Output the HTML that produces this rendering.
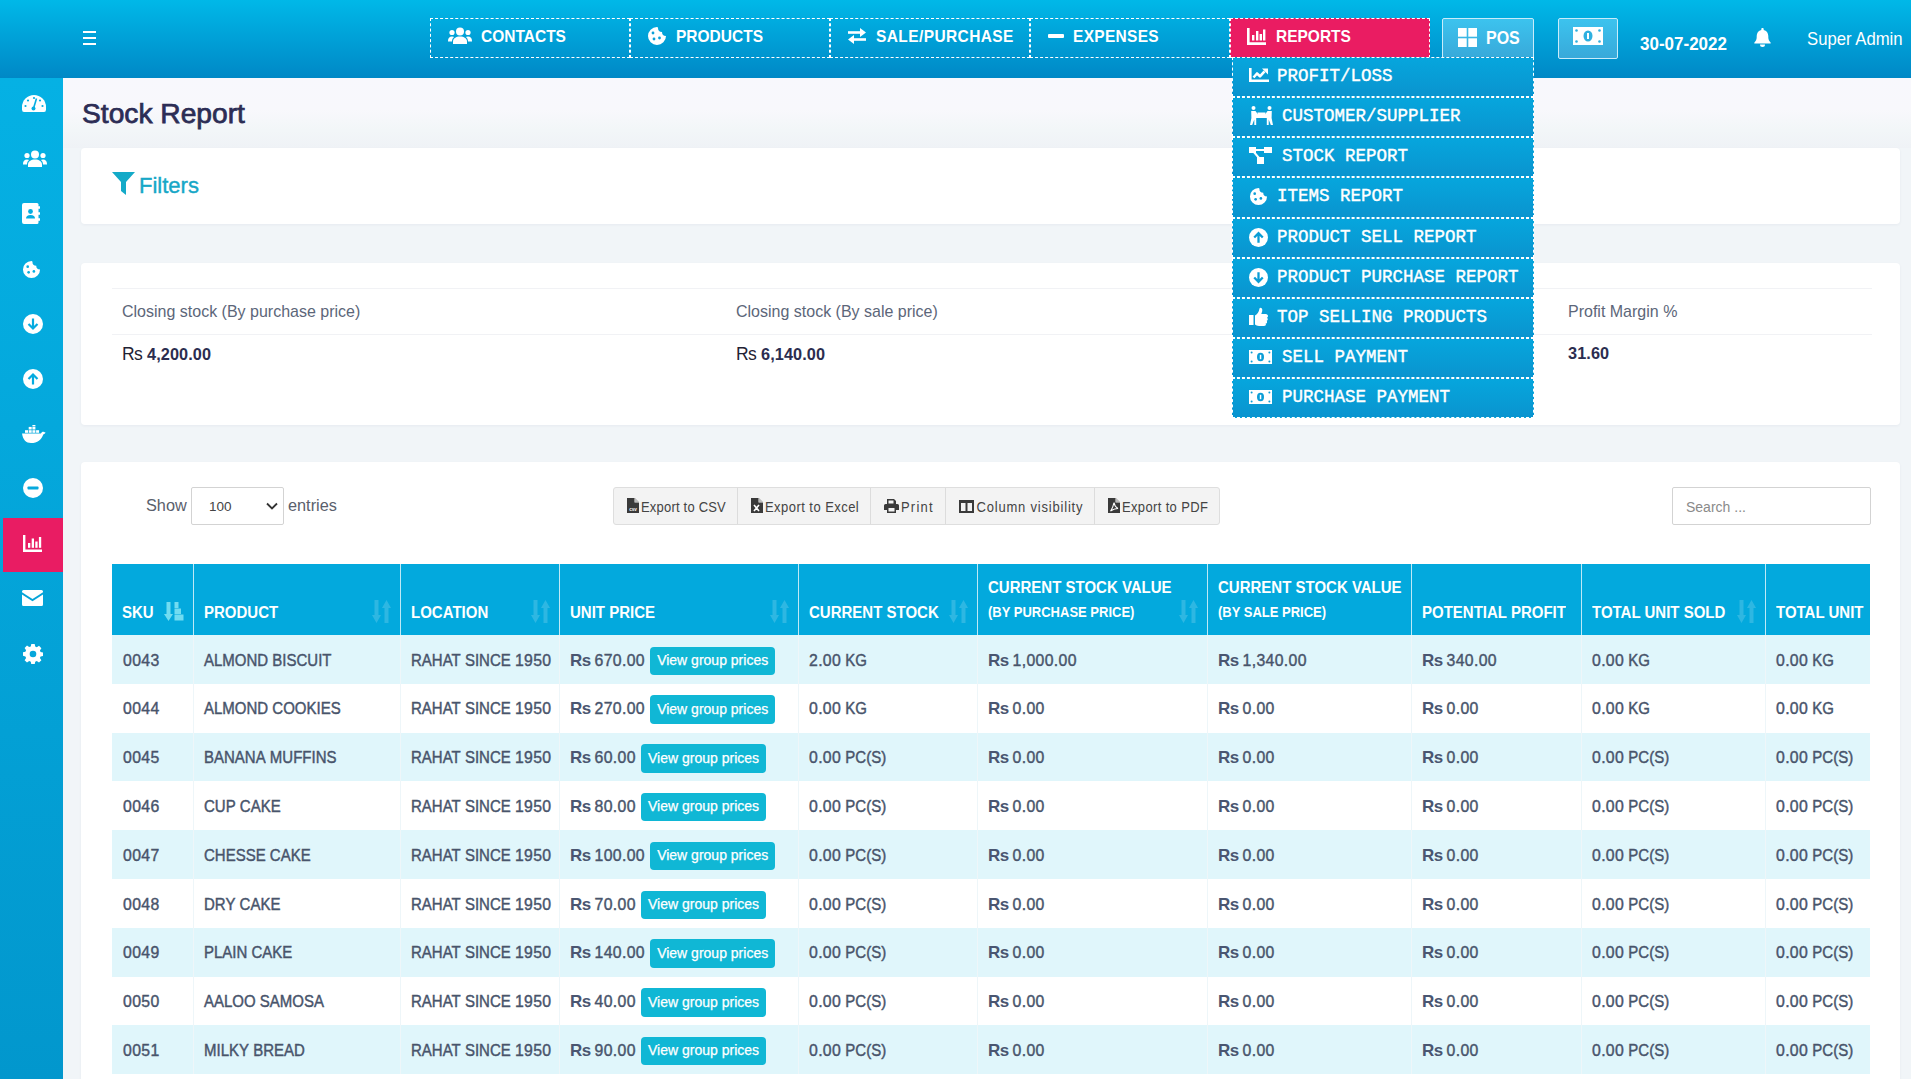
<!DOCTYPE html>
<html><head><meta charset="utf-8">
<style>
*{box-sizing:border-box;margin:0;padding:0}
html,body{width:1911px;height:1079px;overflow:hidden}
body{font-family:"Liberation Sans",sans-serif;background:#f1f5f8;position:relative;color:#4b5567}
.abs{position:absolute}
svg{display:block}
#hdr{left:0;top:0;width:1911px;height:78px;background:linear-gradient(#00b8e8,#0088c6)}
#side{left:0;top:78px;width:63px;height:1001px;background:linear-gradient(#05b1e4,#0297cd)}
.nav{position:absolute;top:18px;height:40px;width:200px;border:1px dashed #fff;color:#fff;font-size:15.5px;font-weight:bold;white-space:nowrap}
.nav .t{position:absolute;top:8.5px;transform:scaleY(1.1);transform-origin:0 80%}
.nav svg{position:absolute}
.btnh{position:absolute;top:18px;height:41px;border:1px solid #c9ecfa;border-radius:2px;background:linear-gradient(#3cc3ee,#38a9da)}
.dd{position:absolute;z-index:10;left:1232px;width:302px;height:40.2px;border:1px dashed #fff;background:linear-gradient(#06a6dd,#0a94cf);color:#fff;font-family:"Liberation Mono",monospace;font-weight:normal;font-size:17.5px;-webkit-text-stroke:.4px #fff;white-space:nowrap}
.dd .t{position:absolute;top:8px;transform:scaleY(1.08);transform-origin:0 80%}
.dd svg{position:absolute}
.sic{position:absolute;left:0;width:63px;height:55px}
.sic svg{position:absolute;left:50%;top:50%;transform:translate(-50%,-50%)}
.card{position:absolute;left:81px;width:1819px;background:#fff;border-radius:4px;box-shadow:0 1px 3px rgba(30,40,90,.05)}
</style></head>
<body>
<div id="hdr" class="abs"></div>
<div class="abs" style="left:0;top:78px;width:1911px;height:1px;background:#e2fbff"></div>
<!-- hamburger -->
<div class="abs" style="left:83px;top:31px;width:13px;height:2px;background:#fff"></div>
<div class="abs" style="left:83px;top:37px;width:13px;height:2px;background:#fff"></div>
<div class="abs" style="left:83px;top:42.5px;width:13px;height:2px;background:#fff"></div>

<!-- nav -->
<div class="nav" style="left:430px">
  <svg style="left:17px;top:8px" width="24" height="18" viewBox="0 0 24 18"><circle cx="12" cy="4.5" r="4" fill="#fff"/><circle cx="4" cy="5.5" r="2.6" fill="#fff"/><circle cx="20" cy="5.5" r="2.6" fill="#fff"/><path d="M5 17v-2.5c0-3 3-5 7-5s7 2 7 5V17z" fill="#fff"/><path d="M0 14c0-3 1.5-4.5 4-4.5 1 0 1.6.2 2.2.6C4.8 11 4 12.5 4 14.5H0z" fill="#fff"/><path d="M24 14c0-3-1.5-4.5-4-4.5-1 0-1.6.2-2.2.6 1.4.9 2.2 2.4 2.2 4.4H24z" fill="#fff"/></svg>
  <span class="t" style="left:50px">CONTACTS</span>
</div>
<div class="nav" style="left:630px">
  <svg style="left:16px;top:6.5px" width="20" height="20" viewBox="0 0 20 20"><path d="M10 1a9 9 0 1 0 9 9 4 4 0 0 1-4-4 4 4 0 0 1-4-4c0-.4 0-.7-1-1z" fill="#fff"/><circle cx="6" cy="7" r="1.4" fill="#0aa0d8"/><circle cx="7" cy="13" r="1.4" fill="#0aa0d8"/><circle cx="12.5" cy="12" r="1.4" fill="#0aa0d8"/></svg>
  <span class="t" style="left:45px">PRODUCTS</span>
</div>
<div class="nav" style="left:830px">
  <svg style="left:16px;top:9px" width="20" height="16" viewBox="0 0 20 16"><path d="M1 4.5h14" stroke="#fff" stroke-width="2.6"/><path d="M13 0l6 4.5-6 4.5z" fill="#fff"/><path d="M5 11.5h14" stroke="#fff" stroke-width="2.6"/><path d="M7 7l-6 4.5 6 4.5z" fill="#fff"/></svg>
  <span class="t" style="left:45px;letter-spacing:.4px">SALE/PURCHASE</span>
</div>
<div class="nav" style="left:1030px">
  <div class="abs" style="left:17px;top:15px;width:16px;height:3.5px;background:#fff;border-radius:1px"></div>
  <span class="t" style="left:42px;letter-spacing:.3px">EXPENSES</span>
</div>
<div class="nav" style="left:1230px;background:#ea1c62">
  <svg style="left:16px;top:9px" width="19" height="17" viewBox="0 0 19 17"><path d="M0 0h2.6v14.2H19V17H0z" fill="#fff"/><rect x="5" y="7" width="2.4" height="5.5" fill="#fff"/><rect x="9" y="3" width="2.4" height="9.5" fill="#fff"/><rect x="12.6" y="6" width="2.4" height="6.5" fill="#fff"/><rect x="16" y="1.5" width="2.4" height="11" fill="#fff"/></svg>
  <span class="t" style="left:45px">REPORTS</span>
</div>

<!-- POS -->
<div class="btnh" style="left:1442px;width:92px">
  <svg style="position:absolute;left:15px;top:9px" width="19" height="19" viewBox="0 0 19 19"><rect x="0" y="0" width="8.7" height="8.7" fill="#fff"/><rect x="10.3" y="0" width="8.7" height="8.7" fill="#fff"/><rect x="0" y="10.3" width="8.7" height="8.7" fill="#fff"/><rect x="10.3" y="10.3" width="8.7" height="8.7" fill="#fff"/></svg>
  <span class="abs" style="left:43px;top:10.5px;color:#fff;font-weight:bold;font-size:16px;transform:scaleY(1.12);transform-origin:0 80%">POS</span>
</div>
<!-- cash -->
<div class="btnh" style="left:1558px;width:60px">
  <svg style="position:absolute;left:14px;top:8px" width="30" height="18" viewBox="0 0 30 18"><rect x="0" y="0" width="30" height="18" fill="#fff"/><ellipse cx="15" cy="9" rx="4.5" ry="5.5" fill="#2fb0e0"/><rect x="14" y="6" width="2" height="6" fill="#fff"/><circle cx="3.5" cy="3.5" r="1.3" fill="#2fb0e0"/><circle cx="26.5" cy="3.5" r="1.3" fill="#2fb0e0"/><circle cx="3.5" cy="14.5" r="1.3" fill="#2fb0e0"/><circle cx="26.5" cy="14.5" r="1.3" fill="#2fb0e0"/></svg>
</div>
<div class="abs" style="left:1640px;top:35px;color:#fff;font-weight:bold;font-size:17px;transform:scaleY(1.05);transform-origin:0 80%">30-07-2022</div>
<svg class="abs" style="left:1754px;top:28px" width="17" height="19" viewBox="0 0 17 19"><path d="M8.5 0c.8 0 1.2.5 1.2 1.2v.7c2.8.6 4.6 3 4.6 6v1.3c0 2.3.9 3.8 2.1 5 .5.5.5 1.4-.4 1.4H1c-.9 0-.9-.9-.4-1.4 1.2-1.2 2.1-2.7 2.1-5V7.9c0-3 1.8-5.4 4.6-6v-.7C7.3.5 7.7 0 8.5 0z" fill="#fff"/><path d="M6 16.5h5a2.5 2.5 0 0 1-5 0z" fill="#fff"/></svg>
<div class="abs" style="left:1807px;top:30px;color:#fff;font-size:16.7px;transform:scaleY(1.08);transform-origin:0 80%">Super Admin</div>


<div class="abs" style="left:63px;top:78px;width:1848px;height:70px;background:linear-gradient(#f8f8fd 0%,#f8f8fc 45%,#f2f6f8 75%,#eff2f6 100%)"></div>
<div id="side" class="abs"></div>
<div class="abs" style="left:3px;top:518px;width:60px;height:54px;background:#e91c63"></div>
<!-- gauge -->
<svg class="abs" style="left:22px;top:95px" width="24" height="17" viewBox="0 0 24 17"><path d="M12 0A12 12 0 0 0 0 12v2.5Q0 17 2 17h20q2 0 2-2.5V12A12 12 0 0 0 12 0z" fill="#fff"/><circle cx="6" cy="5.5" r="1.1" fill="#05aee2"/><circle cx="12" cy="3" r="1.1" fill="#05aee2"/><circle cx="18" cy="5.5" r="1.1" fill="#05aee2"/><circle cx="3.5" cy="11" r="1.1" fill="#05aee2"/><circle cx="20.5" cy="11" r="1.1" fill="#05aee2"/><path d="M11.5 13.5L14.5 3.5" stroke="#05aee2" stroke-width="1.6"/><circle cx="11.5" cy="13.5" r="2" fill="#05aee2"/></svg>
<!-- users -->
<svg class="abs" style="left:22px;top:150px" width="26" height="18" viewBox="0 0 24 18"><circle cx="12" cy="4.5" r="4" fill="#fff"/><circle cx="4" cy="5.5" r="2.6" fill="#fff"/><circle cx="20" cy="5.5" r="2.6" fill="#fff"/><path d="M5 17v-2.5c0-3 3-5 7-5s7 2 7 5V17z" fill="#fff"/><path d="M0 14c0-3 1.5-4.5 4-4.5 1 0 1.6.2 2.2.6C4.8 11 4 12.5 4 14.5H0z" fill="#fff"/><path d="M24 14c0-3-1.5-4.5-4-4.5-1 0-1.6.2-2.2.6 1.4.9 2.2 2.4 2.2 4.4H24z" fill="#fff"/></svg>
<!-- address book -->
<svg class="abs" style="left:22px;top:203px" width="18" height="21" viewBox="0 0 18 21"><path d="M2 0h13q1.5 0 1.5 1.5V19.5Q16.5 21 15 21H2Q0 21 0 19V2Q0 0 2 0z" fill="#fff"/><rect x="16" y="3" width="2" height="3" rx="1" fill="#fff"/><rect x="16" y="9" width="2" height="3" rx="1" fill="#fff"/><rect x="16" y="15" width="2" height="3" rx="1" fill="#fff"/><circle cx="8.5" cy="8.5" r="2.4" fill="#05aee2"/><path d="M4 15.5q0-3.5 4.5-3.5t4.5 3.5z" fill="#05aee2"/></svg>
<!-- cookie -->
<svg class="abs" style="left:22px;top:260px" width="19" height="19" viewBox="0 0 20 20"><path d="M10 1a9 9 0 1 0 9 9 4 4 0 0 1-4-4 4 4 0 0 1-4-4c0-.4 0-.7-1-1z" fill="#fff"/><circle cx="6" cy="7" r="1.4" fill="#05aee2"/><circle cx="7" cy="13" r="1.4" fill="#05aee2"/><circle cx="12.5" cy="12" r="1.4" fill="#05aee2"/></svg>
<!-- down -->
<svg class="abs" style="left:23px;top:314px" width="20" height="20" viewBox="0 0 20 20"><circle cx="10" cy="10" r="10" fill="#fff"/><path d="M10 4.5V14.5M5.5 10l4.5 4.5 4.5-4.5" stroke="#05abe0" stroke-width="2.2" fill="none"/></svg>
<!-- up -->
<svg class="abs" style="left:23px;top:369px" width="20" height="20" viewBox="0 0 20 20"><circle cx="10" cy="10" r="10" fill="#fff"/><path d="M10 15.5V5.5M5.5 10l4.5-4.5 4.5 4.5" stroke="#05abe0" stroke-width="2.2" fill="none"/></svg>
<!-- docker -->
<svg class="abs" style="left:22px;top:425px" width="24" height="18" viewBox="0 0 24 18"><path d="M0 8.5h19c.5-1.5 2-2 3-1.5l1.5.6c-.4 1-1.2 1.6-2.2 1.8C19.5 14.5 15.5 18 9 18 4 18 1 15 0 8.5z" fill="#fff"/><rect x="3" y="5.2" width="3" height="2.6" fill="#fff"/><rect x="6.7" y="5.2" width="3" height="2.6" fill="#fff"/><rect x="10.4" y="5.2" width="3" height="2.6" fill="#fff"/><rect x="14.1" y="5.2" width="3" height="2.6" fill="#fff"/><rect x="6.7" y="1.9" width="3" height="2.6" fill="#fff"/><rect x="10.4" y="1.9" width="3" height="2.6" fill="#fff"/><rect x="10.4" y="-1" width="3" height="2.4" fill="#fff"/></svg>
<!-- minus -->
<svg class="abs" style="left:23px;top:478px" width="20" height="20" viewBox="0 0 20 20"><circle cx="10" cy="10" r="10" fill="#fff"/><rect x="4.5" y="8.4" width="11" height="3.2" rx=".8" fill="#05a9de"/></svg>
<!-- chart -->
<svg class="abs" style="left:22px;top:535px" width="21" height="17" viewBox="0 0 19 17"><path d="M0 0h2.4v14.4H19V17H0z" fill="#fff"/><rect x="5" y="8" width="2.3" height="4.8" fill="#fff"/><rect x="8.7" y="3.5" width="2.3" height="9.3" fill="#fff"/><rect x="12.3" y="6.5" width="2.3" height="6.3" fill="#fff"/><rect x="15.9" y="2" width="2.3" height="10.8" fill="#fff"/></svg>
<!-- envelope -->
<svg class="abs" style="left:22px;top:590px" width="21" height="16" viewBox="0 0 21 16"><path d="M1.5 0h18Q21 0 21 1.5v.8L10.5 9 0 2.3v-.8Q0 0 1.5 0z" fill="#fff"/><path d="M0 4.5l10.5 6.8L21 4.5V14.5Q21 16 19.5 16h-18Q0 16 0 14.5z" fill="#fff"/></svg>
<!-- gear -->
<svg class="abs" style="left:23px;top:644px" width="20" height="20" viewBox="0 0 20 20"><path d="M8.3 0h3.4l.5 2.6 1.6.7 2.2-1.5 2.4 2.4-1.5 2.2.7 1.6 2.4.5v3.4l-2.4.5-.7 1.6 1.5 2.2-2.4 2.4-2.2-1.5-1.6.7-.5 2.6H8.3l-.5-2.6-1.6-.7-2.2 1.5-2.4-2.4 1.5-2.2-.7-1.6L0 11.7V8.3l2.4-.5.7-1.6-1.5-2.2 2.4-2.4 2.2 1.5 1.6-.7z" fill="#fff"/><circle cx="10" cy="10" r="3.3" fill="#05a6db"/></svg>


<!-- dropdown -->
<div class="dd" style="top:57.00px">
  <svg style="left:16px;top:10px" width="20" height="14" viewBox="0 0 20 14"><path d="M0 0h2.6v11.4H20V14H0z" fill="#fff"/><path d="M4.5 9.5l3.5-4 3 2.8 4.5-5" stroke="#fff" stroke-width="2.6" fill="none" stroke-linejoin="round"/><path d="M13 0.5h6v6z" fill="#fff"/></svg>
  <span class="t" style="left:44px">PROFIT/LOSS</span>
</div>
<div class="dd" style="top:97.15px">
  <svg style="left:17px;top:8px" width="23" height="19" viewBox="0 0 23 19"><circle cx="3.5" cy="2" r="2" fill="#fff"/><circle cx="19.5" cy="2" r="2" fill="#fff"/><path d="M1.2 5h4.3l2.5 3.5V12H6.2v7H4.3v-5.5L2.2 19H0l1.4-7z" fill="#fff"/><path d="M21.8 5h-4.3L15 8.5V12h1.8v7h1.9v-5.5l2.1 5.5H23l-1.4-7z" fill="#fff"/><rect x="7.5" y="6.5" width="8" height="5.5" fill="#fff"/></svg>
  <span class="t" style="left:49px">CUSTOMER/SUPPLIER</span>
</div>
<div class="dd" style="top:137.30px">
  <svg style="left:16px;top:9px" width="23" height="17" viewBox="0 0 23 17"><rect x="0" y="0" width="7" height="6" fill="#fff"/><rect x="15" y="0" width="8" height="6" fill="#fff"/><rect x="8" y="10" width="7" height="7" fill="#fff"/><path d="M5 3h11M4 4l6 7" stroke="#fff" stroke-width="2"/></svg>
  <span class="t" style="left:49px">STOCK REPORT</span>
</div>
<div class="dd" style="top:177.45px">
  <svg style="left:16px;top:9px" width="19" height="19" viewBox="0 0 20 20"><path d="M10 1a9 9 0 1 0 9 9 4 4 0 0 1-4-4 4 4 0 0 1-4-4c0-.4 0-.7-1-1z" fill="#fff"/><circle cx="6" cy="7" r="1.4" fill="#0a9dd6"/><circle cx="7" cy="13" r="1.4" fill="#0a9dd6"/><circle cx="12.5" cy="12" r="1.4" fill="#0a9dd6"/></svg>
  <span class="t" style="left:44px">ITEMS REPORT</span>
</div>
<div class="dd" style="top:217.60px">
  <svg style="left:16px;top:9px" width="19" height="19" viewBox="0 0 20 20"><circle cx="10" cy="10" r="10" fill="#fff"/><path d="M10 15.5V6M5.5 10l4.5-4.5 4.5 4.5" stroke="#0a9dd6" stroke-width="2.4" fill="none"/></svg>
  <span class="t" style="left:44px">PRODUCT SELL REPORT</span>
</div>
<div class="dd" style="top:257.75px">
  <svg style="left:16px;top:9px" width="19" height="19" viewBox="0 0 20 20"><circle cx="10" cy="10" r="10" fill="#fff"/><path d="M10 4.5V14M5.5 10l4.5 4.5 4.5-4.5" stroke="#0a9dd6" stroke-width="2.4" fill="none"/></svg>
  <span class="t" style="left:44px">PRODUCT PURCHASE REPORT</span>
</div>
<div class="dd" style="top:297.90px">
  <svg style="left:16px;top:8px" width="19" height="19" viewBox="0 0 19 19"><rect x="0" y="8" width="4.5" height="10" fill="#fff"/><path d="M6 8.5c2-1 4-3.5 4.5-7 .2-1.2 2.8-1 2.8 1.5 0 2-1 3.5-1 4h4.5c1.3 0 2.2 1 2.2 2 0 .8-.5 1.4-1 1.7.6.4.8 1 .8 1.5 0 .8-.6 1.4-1.2 1.6.3.3.5.8.5 1.2 0 .9-.7 1.6-1.5 1.6.2.3.3.6.3 1 0 1-.8 1.4-1.8 1.4H10c-2 0-3-1-4-1.5z" fill="#fff"/></svg>
  <span class="t" style="left:44px">TOP SELLING PRODUCTS</span>
</div>
<div class="dd" style="top:338.05px">
  <svg style="left:16px;top:11px" width="23" height="14" viewBox="0 0 23 14"><rect x="0" y="0" width="23" height="14" fill="#fff"/><ellipse cx="11.5" cy="7" rx="3.5" ry="4.2" fill="#0a9dd6"/><rect x="10.8" y="4.8" width="1.5" height="4.4" fill="#fff"/><circle cx="2.6" cy="2.6" r="1" fill="#0a9dd6"/><circle cx="20.4" cy="2.6" r="1" fill="#0a9dd6"/><circle cx="2.6" cy="11.4" r="1" fill="#0a9dd6"/><circle cx="20.4" cy="11.4" r="1" fill="#0a9dd6"/></svg>
  <span class="t" style="left:49px">SELL PAYMENT</span>
</div>
<div class="dd" style="top:378.20px;height:40px">
  <svg style="left:16px;top:11px" width="23" height="14" viewBox="0 0 23 14"><rect x="0" y="0" width="23" height="14" fill="#fff"/><ellipse cx="11.5" cy="7" rx="3.5" ry="4.2" fill="#0a9dd6"/><rect x="10.8" y="4.8" width="1.5" height="4.4" fill="#fff"/><circle cx="2.6" cy="2.6" r="1" fill="#0a9dd6"/><circle cx="20.4" cy="2.6" r="1" fill="#0a9dd6"/><circle cx="2.6" cy="11.4" r="1" fill="#0a9dd6"/><circle cx="20.4" cy="11.4" r="1" fill="#0a9dd6"/></svg>
  <span class="t" style="left:49px">PURCHASE PAYMENT</span>
</div>
<style>
.tx{position:absolute;white-space:nowrap}
.hd{position:absolute;top:564px;height:71px;background:#03a9dd;color:#fff;font-weight:bold;font-size:15px;white-space:nowrap}
.hd .l{position:absolute;left:10px;transform:scaleY(1.16);transform-origin:0 80%}
.srt{position:absolute;top:38px;opacity:.35}
.row{position:absolute;left:112px;width:1758px;height:48.875px}
.cell{position:absolute;top:16.5px;font-size:15px;color:#48546b;white-space:nowrap;-webkit-text-stroke:.4px #48546b}
.vg{display:inline-block;vertical-align:top;margin-top:-5px;margin-left:1px;height:28.5px;padding:5.5px 7px 0 7px;background:#10b7d5;color:#fff;border-radius:4px;font-size:14px;-webkit-text-stroke:.25px #fff}
.rs{font-weight:bold;font-size:17px;letter-spacing:-.6px;margin-right:4px;color:#4a5671;line-height:1;-webkit-text-stroke:0}
.n{font-size:15.8px;letter-spacing:.35px}
.w{display:inline-block;transform:scaleY(1.08);transform-origin:0 80%}
.btn{position:absolute;top:0;height:37px;border-right:1px solid #dcdcdc;font-size:13px;color:#444}
</style>
<div class="tx" style="left:82px;top:97px;font-size:28.2px;font-weight:normal;color:#2c2d55;-webkit-text-stroke:.75px #2c2d55">Stock Report</div>
<div class="card" style="top:148px;height:76px"></div>
<svg class="abs" style="left:112px;top:172px" width="23" height="23" viewBox="0 0 23 23"><path d="M0 0h23L14 10v13l-5-4V10z" fill="#14aac8"/></svg>
<div class="tx" style="left:139px;top:173px;font-size:22px;color:#17a7c7;-webkit-text-stroke:.4px #17a7c7">Filters</div>
<div class="card" style="top:263px;height:162px"></div>
<div class="abs" style="left:112px;top:288px;width:1760px;height:1px;background:#f1f2f5"></div>
<div class="abs" style="left:112px;top:334px;width:1760px;height:1px;background:#f1f2f5"></div>
<div class="tx" style="left:122px;top:303px;font-size:16px;color:#5c6679;transform:scaleY(1.05);transform-origin:0 80%">Closing stock (By purchase price)</div>
<div class="tx" style="left:122px;top:344px;font-size:16.3px;font-weight:bold;color:#2b2d50;letter-spacing:.1px"><span style="font-weight:normal;font-size:17.5px;letter-spacing:-.7px;margin-right:5px;color:#1f2233">Rs</span>4,200.00</div>
<div class="tx" style="left:736px;top:303px;font-size:16px;color:#5c6679;transform:scaleY(1.05);transform-origin:0 80%">Closing stock (By sale price)</div>
<div class="tx" style="left:736px;top:344px;font-size:16.3px;font-weight:bold;color:#2b2d50;letter-spacing:.1px"><span style="font-weight:normal;font-size:17.5px;letter-spacing:-.7px;margin-right:5px;color:#1f2233">Rs</span>6,140.00</div>
<div class="tx" style="left:1350px;top:303px;font-size:16px;color:#5c6679;transform:scaleY(1.05);transform-origin:0 80%">Potential profit</div>
<div class="tx" style="left:1350px;top:344px;font-size:16.3px;font-weight:bold;color:#2b2d50;letter-spacing:.1px"><span style="font-weight:normal;font-size:17.5px;letter-spacing:-.7px;margin-right:5px;color:#1f2233">Rs</span>1,940.00</div>
<div class="tx" style="left:1568px;top:303px;font-size:16px;color:#5c6679;transform:scaleY(1.05);transform-origin:0 80%">Profit Margin %</div>
<div class="tx" style="left:1568px;top:344px;font-size:16.3px;font-weight:bold;color:#2b2d50;letter-spacing:.1px">31.60</div>
<div class="card" style="top:462px;height:640px"></div>
<div class="tx" style="left:146px;top:496px;font-size:16.3px;color:#5a606c">Show</div>
<div class="abs" style="left:191px;top:487px;width:93px;height:38px;border:1px solid #d3d3d3;border-radius:2px;background:#fff"></div>
<div class="tx" style="left:209px;top:499px;font-size:13.5px;color:#444">100</div>
<svg class="abs" style="left:266px;top:502px" width="12" height="8" viewBox="0 0 12 8"><path d="M1 1.5l5 5 5-5" stroke="#333" stroke-width="1.8" fill="none"/></svg>
<div class="tx" style="left:288px;top:496px;font-size:16.3px;color:#5a606c">entries</div>
<div class="abs" style="left:613px;top:487px;width:607px;height:38px;border:1px solid #dedede;border-radius:3px;background:#f3f3f3;overflow:hidden">
<div class="btn" style="left:0px;width:124px"><svg class="abs" style="left:13px;top:10px" width="12" height="15" viewBox="0 0 12 15"><path d="M0 0h7.5L12 4.5V15H0z" fill="#3a3a3a"/><path d="M7.5 0v4.5H12" fill="#f3f3f3"/><path d="M8 0v4h4" fill="#bdbdbd"/><text x="6" y="13" font-size="4.6" font-family="Liberation Sans" font-weight="bold" fill="#fff" text-anchor="middle">csv</text></svg><span class="tx" style="left:27px;top:11.5px;letter-spacing:0.2px;transform:scaleY(1.15);transform-origin:0 80%">Export to CSV</span></div>
<div class="btn" style="left:124px;width:133px"><svg class="abs" style="left:13px;top:10px" width="12" height="15" viewBox="0 0 12 15"><path d="M0 0h7.5L12 4.5V15H0z" fill="#3a3a3a"/><path d="M7.5 0v4.5H12" fill="#f3f3f3"/><path d="M8 0v4h4" fill="#bdbdbd"/><path d="M3 7l5 6M8 7l-5 6" stroke="#fff" stroke-width="1.6"/></svg><span class="tx" style="left:27px;top:11.5px;letter-spacing:0.45px;transform:scaleY(1.15);transform-origin:0 80%">Export to Excel</span></div>
<div class="btn" style="left:257px;width:75px"><svg class="abs" style="left:13px;top:11px" width="15" height="14" viewBox="0 0 15 14"><path d="M3 0h7l2 2v3H3z" fill="#3a3a3a"/><path d="M0 6.5Q0 5 1.5 5h12Q15 5 15 6.5V11h-3v3H3v-3H0z" fill="#3a3a3a"/><rect x="4.5" y="9" width="6" height="3.5" fill="#f3f3f3"/><rect x="4.5" y="1.5" width="5" height="3" fill="#f3f3f3"/></svg><span class="tx" style="left:30px;top:11.5px;letter-spacing:1.2px;transform:scaleY(1.15);transform-origin:0 80%">Print</span></div>
<div class="btn" style="left:332px;width:149px"><svg class="abs" style="left:13px;top:12px" width="15" height="13" viewBox="0 0 15 13"><path d="M0 0h15v13H0z" fill="#3a3a3a"/><rect x="2" y="3" width="4.5" height="8" fill="#f3f3f3"/><rect x="8.5" y="3" width="4.5" height="8" fill="#f3f3f3"/></svg><span class="tx" style="left:30.5px;top:11.5px;letter-spacing:0.8px;transform:scaleY(1.15);transform-origin:0 80%">Column visibility</span></div>
<div class="btn" style="left:481px;width:126px"><svg class="abs" style="left:13px;top:10px" width="12" height="15" viewBox="0 0 12 15"><path d="M0 0h7.5L12 4.5V15H0z" fill="#3a3a3a"/><path d="M7.5 0v4.5H12" fill="#f3f3f3"/><path d="M8 0v4h4" fill="#bdbdbd"/><path d="M2.5 13c1.5-2 3-6 3.5-8.5.4 2.5 2 5 4 6-2 0-5 1-7.5 2.5z" stroke="#fff" stroke-width="1.1" fill="none"/></svg><span class="tx" style="left:27px;top:11.5px;letter-spacing:0.35px;transform:scaleY(1.15);transform-origin:0 80%">Export to PDF</span></div>
</div>
<div class="abs" style="left:1672px;top:487px;width:199px;height:38px;border:1px solid #d3d3d3;border-radius:2px;background:#fff"></div>
<div class="tx" style="left:1686px;top:498.5px;font-size:14px;color:#8a8a8a">Search ...</div>
<div class="hd" style="left:112px;width:81px;">
<span class="l" style="top:40px">SKU</span>
<svg class="abs" style="left:52px;top:38px;opacity:.6" width="20" height="19" viewBox="0 0 20 19"><rect x="2.5" y="0" width="4" height="13" fill="#bff"/><path d="M0 12h9l-4.5 7z" fill="#bff"/><rect x="10.5" y="0" width="4" height="6" fill="#bff"/><rect x="10.5" y="6.5" width="6.5" height="5.5" fill="#bff"/><rect x="10.5" y="12.5" width="9" height="6" fill="#bff"/></svg>
</div>
<div class="hd" style="left:193px;width:207px;border-left:1px solid #bfe9f6;">
<span class="l" style="top:40px">PRODUCT</span>
<svg class="abs" style="left:178px;top:36px;opacity:.17" width="19" height="23" viewBox="0 0 19 23"><rect x="2.5" y="0" width="4" height="16" fill="#fff"/><path d="M0 15h9l-4.5 8z" fill="#fff"/><rect x="12.5" y="7" width="4" height="16" fill="#fff"/><path d="M10 8h9l-4.5-8z" fill="#fff"/></svg>
</div>
<div class="hd" style="left:400px;width:159px;border-left:1px solid #bfe9f6;">
<span class="l" style="top:40px">LOCATION</span>
<svg class="abs" style="left:130px;top:36px;opacity:.17" width="19" height="23" viewBox="0 0 19 23"><rect x="2.5" y="0" width="4" height="16" fill="#fff"/><path d="M0 15h9l-4.5 8z" fill="#fff"/><rect x="12.5" y="7" width="4" height="16" fill="#fff"/><path d="M10 8h9l-4.5-8z" fill="#fff"/></svg>
</div>
<div class="hd" style="left:559px;width:239px;border-left:1px solid #bfe9f6;">
<span class="l" style="top:40px">UNIT PRICE</span>
<svg class="abs" style="left:210px;top:36px;opacity:.17" width="19" height="23" viewBox="0 0 19 23"><rect x="2.5" y="0" width="4" height="16" fill="#fff"/><path d="M0 15h9l-4.5 8z" fill="#fff"/><rect x="12.5" y="7" width="4" height="16" fill="#fff"/><path d="M10 8h9l-4.5-8z" fill="#fff"/></svg>
</div>
<div class="hd" style="left:798px;width:179px;border-left:1px solid #bfe9f6;">
<span class="l" style="top:40px">CURRENT STOCK</span>
<svg class="abs" style="left:150px;top:36px;opacity:.17" width="19" height="23" viewBox="0 0 19 23"><rect x="2.5" y="0" width="4" height="16" fill="#fff"/><path d="M0 15h9l-4.5 8z" fill="#fff"/><rect x="12.5" y="7" width="4" height="16" fill="#fff"/><path d="M10 8h9l-4.5-8z" fill="#fff"/></svg>
</div>
<div class="hd" style="left:977px;width:230px;border-left:1px solid #bfe9f6;">
<span class="l" style="top:15px">CURRENT STOCK VALUE</span><span class="l" style="top:41px;font-size:13px">(BY PURCHASE PRICE)</span>
<svg class="abs" style="left:201px;top:36px;opacity:.17" width="19" height="23" viewBox="0 0 19 23"><rect x="2.5" y="0" width="4" height="16" fill="#fff"/><path d="M0 15h9l-4.5 8z" fill="#fff"/><rect x="12.5" y="7" width="4" height="16" fill="#fff"/><path d="M10 8h9l-4.5-8z" fill="#fff"/></svg>
</div>
<div class="hd" style="left:1207px;width:204px;border-left:1px solid #bfe9f6;">
<span class="l" style="top:15px">CURRENT STOCK VALUE</span><span class="l" style="top:41px;font-size:13px">(BY SALE PRICE)</span>
</div>
<div class="hd" style="left:1411px;width:170px;border-left:1px solid #bfe9f6;">
<span class="l" style="top:40px">POTENTIAL PROFIT</span>
</div>
<div class="hd" style="left:1581px;width:184px;border-left:1px solid #bfe9f6;">
<span class="l" style="top:40px">TOTAL UNIT SOLD</span>
<svg class="abs" style="left:155px;top:36px;opacity:.17" width="19" height="23" viewBox="0 0 19 23"><rect x="2.5" y="0" width="4" height="16" fill="#fff"/><path d="M0 15h9l-4.5 8z" fill="#fff"/><rect x="12.5" y="7" width="4" height="16" fill="#fff"/><path d="M10 8h9l-4.5-8z" fill="#fff"/></svg>
</div>
<div class="hd" style="left:1765px;width:105px;border-left:1px solid #bfe9f6;">
<span class="l" style="top:40px">TOTAL UNIT</span>
</div>
<div class="row" style="top:635.000px;background:#e0f6fb">
<div class="abs" style="left:81px;top:0;width:1px;height:100%;background:#eef6f9"></div>
<div class="abs" style="left:288px;top:0;width:1px;height:100%;background:#eef6f9"></div>
<div class="abs" style="left:447px;top:0;width:1px;height:100%;background:#eef6f9"></div>
<div class="abs" style="left:686px;top:0;width:1px;height:100%;background:#eef6f9"></div>
<div class="abs" style="left:865px;top:0;width:1px;height:100%;background:#eef6f9"></div>
<div class="abs" style="left:1095px;top:0;width:1px;height:100%;background:#eef6f9"></div>
<div class="abs" style="left:1299px;top:0;width:1px;height:100%;background:#eef6f9"></div>
<div class="abs" style="left:1469px;top:0;width:1px;height:100%;background:#eef6f9"></div>
<div class="abs" style="left:1653px;top:0;width:1px;height:100%;background:#eef6f9"></div>
<div class="cell" style="left:11px"><span class="n">0043</span></div>
<div class="cell" style="left:92px"><span class="w">ALMOND</span> <span class="w">BISCUIT</span></div>
<div class="cell" style="left:299px"><span class="w">RAHAT</span> <span class="w">SINCE</span> <span class="n">1950</span></div>
<div class="cell" style="left:458px"><span class="rs">Rs</span><span class="n">670.00</span> <span class="vg">View group prices</span></div>
<div class="cell" style="left:697px"><span class="n">2.00</span> <span class="w">KG</span></div>
<div class="cell" style="left:876px"><span class="rs">Rs</span><span class="n">1,000.00</span></div>
<div class="cell" style="left:1106px"><span class="rs">Rs</span><span class="n">1,340.00</span></div>
<div class="cell" style="left:1310px"><span class="rs">Rs</span><span class="n">340.00</span></div>
<div class="cell" style="left:1480px"><span class="n">0.00</span> <span class="w">KG</span></div>
<div class="cell" style="left:1664px"><span class="n">0.00</span> <span class="w">KG</span></div>
</div>
<div class="row" style="top:683.800px;background:#ffffff">
<div class="abs" style="left:81px;top:0;width:1px;height:100%;background:#eef6f9"></div>
<div class="abs" style="left:288px;top:0;width:1px;height:100%;background:#eef6f9"></div>
<div class="abs" style="left:447px;top:0;width:1px;height:100%;background:#eef6f9"></div>
<div class="abs" style="left:686px;top:0;width:1px;height:100%;background:#eef6f9"></div>
<div class="abs" style="left:865px;top:0;width:1px;height:100%;background:#eef6f9"></div>
<div class="abs" style="left:1095px;top:0;width:1px;height:100%;background:#eef6f9"></div>
<div class="abs" style="left:1299px;top:0;width:1px;height:100%;background:#eef6f9"></div>
<div class="abs" style="left:1469px;top:0;width:1px;height:100%;background:#eef6f9"></div>
<div class="abs" style="left:1653px;top:0;width:1px;height:100%;background:#eef6f9"></div>
<div class="cell" style="left:11px"><span class="n">0044</span></div>
<div class="cell" style="left:92px"><span class="w">ALMOND</span> <span class="w">COOKIES</span></div>
<div class="cell" style="left:299px"><span class="w">RAHAT</span> <span class="w">SINCE</span> <span class="n">1950</span></div>
<div class="cell" style="left:458px"><span class="rs">Rs</span><span class="n">270.00</span> <span class="vg">View group prices</span></div>
<div class="cell" style="left:697px"><span class="n">0.00</span> <span class="w">KG</span></div>
<div class="cell" style="left:876px"><span class="rs">Rs</span><span class="n">0.00</span></div>
<div class="cell" style="left:1106px"><span class="rs">Rs</span><span class="n">0.00</span></div>
<div class="cell" style="left:1310px"><span class="rs">Rs</span><span class="n">0.00</span></div>
<div class="cell" style="left:1480px"><span class="n">0.00</span> <span class="w">KG</span></div>
<div class="cell" style="left:1664px"><span class="n">0.00</span> <span class="w">KG</span></div>
</div>
<div class="row" style="top:732.600px;background:#e0f6fb">
<div class="abs" style="left:81px;top:0;width:1px;height:100%;background:#eef6f9"></div>
<div class="abs" style="left:288px;top:0;width:1px;height:100%;background:#eef6f9"></div>
<div class="abs" style="left:447px;top:0;width:1px;height:100%;background:#eef6f9"></div>
<div class="abs" style="left:686px;top:0;width:1px;height:100%;background:#eef6f9"></div>
<div class="abs" style="left:865px;top:0;width:1px;height:100%;background:#eef6f9"></div>
<div class="abs" style="left:1095px;top:0;width:1px;height:100%;background:#eef6f9"></div>
<div class="abs" style="left:1299px;top:0;width:1px;height:100%;background:#eef6f9"></div>
<div class="abs" style="left:1469px;top:0;width:1px;height:100%;background:#eef6f9"></div>
<div class="abs" style="left:1653px;top:0;width:1px;height:100%;background:#eef6f9"></div>
<div class="cell" style="left:11px"><span class="n">0045</span></div>
<div class="cell" style="left:92px"><span class="w">BANANA</span> <span class="w">MUFFINS</span></div>
<div class="cell" style="left:299px"><span class="w">RAHAT</span> <span class="w">SINCE</span> <span class="n">1950</span></div>
<div class="cell" style="left:458px"><span class="rs">Rs</span><span class="n">60.00</span> <span class="vg">View group prices</span></div>
<div class="cell" style="left:697px"><span class="n">0.00</span> <span class="w">PC(S)</span></div>
<div class="cell" style="left:876px"><span class="rs">Rs</span><span class="n">0.00</span></div>
<div class="cell" style="left:1106px"><span class="rs">Rs</span><span class="n">0.00</span></div>
<div class="cell" style="left:1310px"><span class="rs">Rs</span><span class="n">0.00</span></div>
<div class="cell" style="left:1480px"><span class="n">0.00</span> <span class="w">PC(S)</span></div>
<div class="cell" style="left:1664px"><span class="n">0.00</span> <span class="w">PC(S)</span></div>
</div>
<div class="row" style="top:781.400px;background:#ffffff">
<div class="abs" style="left:81px;top:0;width:1px;height:100%;background:#eef6f9"></div>
<div class="abs" style="left:288px;top:0;width:1px;height:100%;background:#eef6f9"></div>
<div class="abs" style="left:447px;top:0;width:1px;height:100%;background:#eef6f9"></div>
<div class="abs" style="left:686px;top:0;width:1px;height:100%;background:#eef6f9"></div>
<div class="abs" style="left:865px;top:0;width:1px;height:100%;background:#eef6f9"></div>
<div class="abs" style="left:1095px;top:0;width:1px;height:100%;background:#eef6f9"></div>
<div class="abs" style="left:1299px;top:0;width:1px;height:100%;background:#eef6f9"></div>
<div class="abs" style="left:1469px;top:0;width:1px;height:100%;background:#eef6f9"></div>
<div class="abs" style="left:1653px;top:0;width:1px;height:100%;background:#eef6f9"></div>
<div class="cell" style="left:11px"><span class="n">0046</span></div>
<div class="cell" style="left:92px"><span class="w">CUP</span> <span class="w">CAKE</span></div>
<div class="cell" style="left:299px"><span class="w">RAHAT</span> <span class="w">SINCE</span> <span class="n">1950</span></div>
<div class="cell" style="left:458px"><span class="rs">Rs</span><span class="n">80.00</span> <span class="vg">View group prices</span></div>
<div class="cell" style="left:697px"><span class="n">0.00</span> <span class="w">PC(S)</span></div>
<div class="cell" style="left:876px"><span class="rs">Rs</span><span class="n">0.00</span></div>
<div class="cell" style="left:1106px"><span class="rs">Rs</span><span class="n">0.00</span></div>
<div class="cell" style="left:1310px"><span class="rs">Rs</span><span class="n">0.00</span></div>
<div class="cell" style="left:1480px"><span class="n">0.00</span> <span class="w">PC(S)</span></div>
<div class="cell" style="left:1664px"><span class="n">0.00</span> <span class="w">PC(S)</span></div>
</div>
<div class="row" style="top:830.200px;background:#e0f6fb">
<div class="abs" style="left:81px;top:0;width:1px;height:100%;background:#eef6f9"></div>
<div class="abs" style="left:288px;top:0;width:1px;height:100%;background:#eef6f9"></div>
<div class="abs" style="left:447px;top:0;width:1px;height:100%;background:#eef6f9"></div>
<div class="abs" style="left:686px;top:0;width:1px;height:100%;background:#eef6f9"></div>
<div class="abs" style="left:865px;top:0;width:1px;height:100%;background:#eef6f9"></div>
<div class="abs" style="left:1095px;top:0;width:1px;height:100%;background:#eef6f9"></div>
<div class="abs" style="left:1299px;top:0;width:1px;height:100%;background:#eef6f9"></div>
<div class="abs" style="left:1469px;top:0;width:1px;height:100%;background:#eef6f9"></div>
<div class="abs" style="left:1653px;top:0;width:1px;height:100%;background:#eef6f9"></div>
<div class="cell" style="left:11px"><span class="n">0047</span></div>
<div class="cell" style="left:92px"><span class="w">CHESSE</span> <span class="w">CAKE</span></div>
<div class="cell" style="left:299px"><span class="w">RAHAT</span> <span class="w">SINCE</span> <span class="n">1950</span></div>
<div class="cell" style="left:458px"><span class="rs">Rs</span><span class="n">100.00</span> <span class="vg">View group prices</span></div>
<div class="cell" style="left:697px"><span class="n">0.00</span> <span class="w">PC(S)</span></div>
<div class="cell" style="left:876px"><span class="rs">Rs</span><span class="n">0.00</span></div>
<div class="cell" style="left:1106px"><span class="rs">Rs</span><span class="n">0.00</span></div>
<div class="cell" style="left:1310px"><span class="rs">Rs</span><span class="n">0.00</span></div>
<div class="cell" style="left:1480px"><span class="n">0.00</span> <span class="w">PC(S)</span></div>
<div class="cell" style="left:1664px"><span class="n">0.00</span> <span class="w">PC(S)</span></div>
</div>
<div class="row" style="top:879.000px;background:#ffffff">
<div class="abs" style="left:81px;top:0;width:1px;height:100%;background:#eef6f9"></div>
<div class="abs" style="left:288px;top:0;width:1px;height:100%;background:#eef6f9"></div>
<div class="abs" style="left:447px;top:0;width:1px;height:100%;background:#eef6f9"></div>
<div class="abs" style="left:686px;top:0;width:1px;height:100%;background:#eef6f9"></div>
<div class="abs" style="left:865px;top:0;width:1px;height:100%;background:#eef6f9"></div>
<div class="abs" style="left:1095px;top:0;width:1px;height:100%;background:#eef6f9"></div>
<div class="abs" style="left:1299px;top:0;width:1px;height:100%;background:#eef6f9"></div>
<div class="abs" style="left:1469px;top:0;width:1px;height:100%;background:#eef6f9"></div>
<div class="abs" style="left:1653px;top:0;width:1px;height:100%;background:#eef6f9"></div>
<div class="cell" style="left:11px"><span class="n">0048</span></div>
<div class="cell" style="left:92px"><span class="w">DRY</span> <span class="w">CAKE</span></div>
<div class="cell" style="left:299px"><span class="w">RAHAT</span> <span class="w">SINCE</span> <span class="n">1950</span></div>
<div class="cell" style="left:458px"><span class="rs">Rs</span><span class="n">70.00</span> <span class="vg">View group prices</span></div>
<div class="cell" style="left:697px"><span class="n">0.00</span> <span class="w">PC(S)</span></div>
<div class="cell" style="left:876px"><span class="rs">Rs</span><span class="n">0.00</span></div>
<div class="cell" style="left:1106px"><span class="rs">Rs</span><span class="n">0.00</span></div>
<div class="cell" style="left:1310px"><span class="rs">Rs</span><span class="n">0.00</span></div>
<div class="cell" style="left:1480px"><span class="n">0.00</span> <span class="w">PC(S)</span></div>
<div class="cell" style="left:1664px"><span class="n">0.00</span> <span class="w">PC(S)</span></div>
</div>
<div class="row" style="top:927.800px;background:#e0f6fb">
<div class="abs" style="left:81px;top:0;width:1px;height:100%;background:#eef6f9"></div>
<div class="abs" style="left:288px;top:0;width:1px;height:100%;background:#eef6f9"></div>
<div class="abs" style="left:447px;top:0;width:1px;height:100%;background:#eef6f9"></div>
<div class="abs" style="left:686px;top:0;width:1px;height:100%;background:#eef6f9"></div>
<div class="abs" style="left:865px;top:0;width:1px;height:100%;background:#eef6f9"></div>
<div class="abs" style="left:1095px;top:0;width:1px;height:100%;background:#eef6f9"></div>
<div class="abs" style="left:1299px;top:0;width:1px;height:100%;background:#eef6f9"></div>
<div class="abs" style="left:1469px;top:0;width:1px;height:100%;background:#eef6f9"></div>
<div class="abs" style="left:1653px;top:0;width:1px;height:100%;background:#eef6f9"></div>
<div class="cell" style="left:11px"><span class="n">0049</span></div>
<div class="cell" style="left:92px"><span class="w">PLAIN</span> <span class="w">CAKE</span></div>
<div class="cell" style="left:299px"><span class="w">RAHAT</span> <span class="w">SINCE</span> <span class="n">1950</span></div>
<div class="cell" style="left:458px"><span class="rs">Rs</span><span class="n">140.00</span> <span class="vg">View group prices</span></div>
<div class="cell" style="left:697px"><span class="n">0.00</span> <span class="w">PC(S)</span></div>
<div class="cell" style="left:876px"><span class="rs">Rs</span><span class="n">0.00</span></div>
<div class="cell" style="left:1106px"><span class="rs">Rs</span><span class="n">0.00</span></div>
<div class="cell" style="left:1310px"><span class="rs">Rs</span><span class="n">0.00</span></div>
<div class="cell" style="left:1480px"><span class="n">0.00</span> <span class="w">PC(S)</span></div>
<div class="cell" style="left:1664px"><span class="n">0.00</span> <span class="w">PC(S)</span></div>
</div>
<div class="row" style="top:976.600px;background:#ffffff">
<div class="abs" style="left:81px;top:0;width:1px;height:100%;background:#eef6f9"></div>
<div class="abs" style="left:288px;top:0;width:1px;height:100%;background:#eef6f9"></div>
<div class="abs" style="left:447px;top:0;width:1px;height:100%;background:#eef6f9"></div>
<div class="abs" style="left:686px;top:0;width:1px;height:100%;background:#eef6f9"></div>
<div class="abs" style="left:865px;top:0;width:1px;height:100%;background:#eef6f9"></div>
<div class="abs" style="left:1095px;top:0;width:1px;height:100%;background:#eef6f9"></div>
<div class="abs" style="left:1299px;top:0;width:1px;height:100%;background:#eef6f9"></div>
<div class="abs" style="left:1469px;top:0;width:1px;height:100%;background:#eef6f9"></div>
<div class="abs" style="left:1653px;top:0;width:1px;height:100%;background:#eef6f9"></div>
<div class="cell" style="left:11px"><span class="n">0050</span></div>
<div class="cell" style="left:92px"><span class="w">AALOO</span> <span class="w">SAMOSA</span></div>
<div class="cell" style="left:299px"><span class="w">RAHAT</span> <span class="w">SINCE</span> <span class="n">1950</span></div>
<div class="cell" style="left:458px"><span class="rs">Rs</span><span class="n">40.00</span> <span class="vg">View group prices</span></div>
<div class="cell" style="left:697px"><span class="n">0.00</span> <span class="w">PC(S)</span></div>
<div class="cell" style="left:876px"><span class="rs">Rs</span><span class="n">0.00</span></div>
<div class="cell" style="left:1106px"><span class="rs">Rs</span><span class="n">0.00</span></div>
<div class="cell" style="left:1310px"><span class="rs">Rs</span><span class="n">0.00</span></div>
<div class="cell" style="left:1480px"><span class="n">0.00</span> <span class="w">PC(S)</span></div>
<div class="cell" style="left:1664px"><span class="n">0.00</span> <span class="w">PC(S)</span></div>
</div>
<div class="row" style="top:1025.400px;background:#e0f6fb">
<div class="abs" style="left:81px;top:0;width:1px;height:100%;background:#eef6f9"></div>
<div class="abs" style="left:288px;top:0;width:1px;height:100%;background:#eef6f9"></div>
<div class="abs" style="left:447px;top:0;width:1px;height:100%;background:#eef6f9"></div>
<div class="abs" style="left:686px;top:0;width:1px;height:100%;background:#eef6f9"></div>
<div class="abs" style="left:865px;top:0;width:1px;height:100%;background:#eef6f9"></div>
<div class="abs" style="left:1095px;top:0;width:1px;height:100%;background:#eef6f9"></div>
<div class="abs" style="left:1299px;top:0;width:1px;height:100%;background:#eef6f9"></div>
<div class="abs" style="left:1469px;top:0;width:1px;height:100%;background:#eef6f9"></div>
<div class="abs" style="left:1653px;top:0;width:1px;height:100%;background:#eef6f9"></div>
<div class="cell" style="left:11px"><span class="n">0051</span></div>
<div class="cell" style="left:92px"><span class="w">MILKY</span> <span class="w">BREAD</span></div>
<div class="cell" style="left:299px"><span class="w">RAHAT</span> <span class="w">SINCE</span> <span class="n">1950</span></div>
<div class="cell" style="left:458px"><span class="rs">Rs</span><span class="n">90.00</span> <span class="vg">View group prices</span></div>
<div class="cell" style="left:697px"><span class="n">0.00</span> <span class="w">PC(S)</span></div>
<div class="cell" style="left:876px"><span class="rs">Rs</span><span class="n">0.00</span></div>
<div class="cell" style="left:1106px"><span class="rs">Rs</span><span class="n">0.00</span></div>
<div class="cell" style="left:1310px"><span class="rs">Rs</span><span class="n">0.00</span></div>
<div class="cell" style="left:1480px"><span class="n">0.00</span> <span class="w">PC(S)</span></div>
<div class="cell" style="left:1664px"><span class="n">0.00</span> <span class="w">PC(S)</span></div>
</div>
</body></html>
